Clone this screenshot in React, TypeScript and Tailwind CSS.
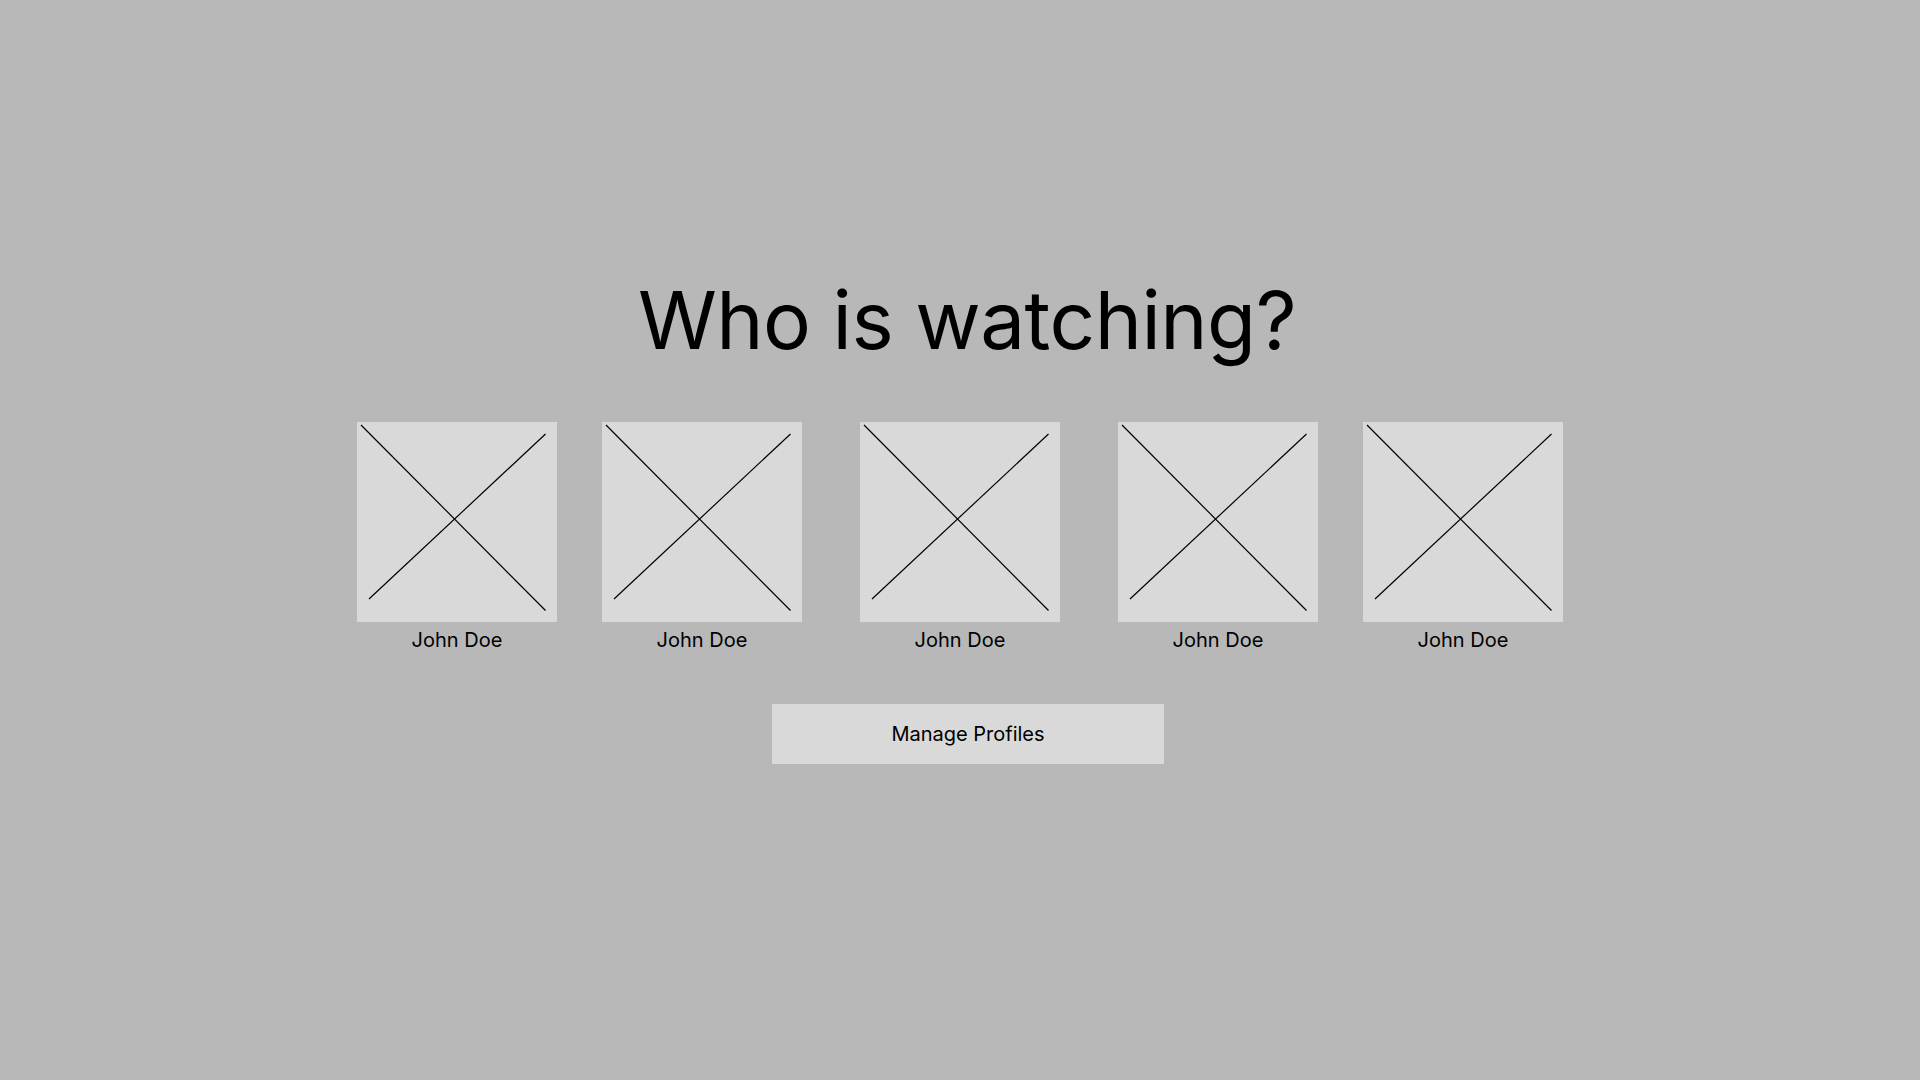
const profiles = ['John Doe', 'John Doe', 'John Doe', 'John Doe', 'John Doe'];

function Placeholder() {
  return (
    <svg width="200" height="200" viewBox="0 0 200 200" className="block bg-[#d9d9d9]">
      <line x1="4" y1="3" x2="188.5" y2="188.5" stroke="#000" strokeWidth="1.2" />
      <line x1="12" y1="177" x2="188.5" y2="12" stroke="#000" strokeWidth="1.2" />
    </svg>
  );
}

function ProfileCard({ name, className = '' }: { name: string; className?: string }) {
  return (
    <button className={`flex flex-col items-center ${className}`}>
      <Placeholder />
      <span className="mt-2 text-[20px] leading-none text-black">{name}</span>
    </button>
  );
}

export default function App() {
  return (
    <div
      className="flex min-h-screen flex-col items-center bg-[#b8b8b8] pt-[280px] text-black"
      style={{ fontFamily: 'Inter, "Noto Sans", sans-serif' }}
    >
      <h1 className="ml-[14px] text-[80px] font-normal leading-none tracking-[-0.5px]">Who is watching?</h1>

      <div className="mt-[62px] flex gap-[45px]">
        {profiles.map((name, i) => (
          <ProfileCard key={i} name={name} className={i === 2 ? 'mx-[13px]' : ''} />
        ))}
      </div>

      <button className="ml-[16px] mt-[54px] h-[60px] w-[392px] bg-[#d9d9d9] text-[20px] leading-none">
        Manage Profiles
      </button>
    </div>
  );
}
